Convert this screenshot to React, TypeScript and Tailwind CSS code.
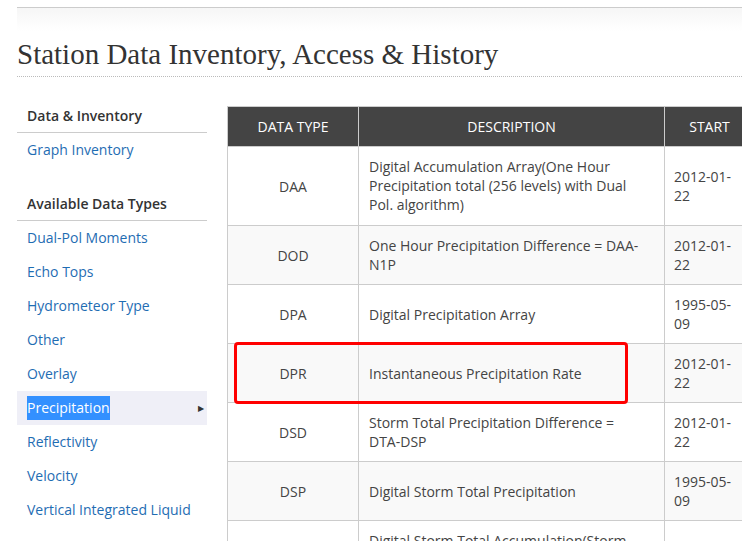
import React from "react";

const sans = { fontFamily: '"Open Sans", "Liberation Sans", sans-serif' };

const rows: { t: string; d: string[]; s: string[]; bg: string }[] = [
  { t: "DAA", d: ["Digital Accumulation Array(One Hour", "Precipitation total (256 levels) with Dual", "Pol. algorithm)"], s: ["2012-01-", "22"], bg: "bg-white" },
  { t: "DOD", d: ["One Hour Precipitation Difference = DAA-", "N1P"], s: ["2012-01-", "22"], bg: "bg-[#f9f9f9]" },
  { t: "DPA", d: ["Digital Precipitation Array"], s: ["1995-05-", "09"], bg: "bg-white" },
  { t: "DPR", d: ["Instantaneous Precipitation Rate"], s: ["2012-01-", "22"], bg: "bg-[#f9f9f9]" },
  { t: "DSD", d: ["Storm Total Precipitation Difference =", "DTA-DSP"], s: ["2012-01-", "22"], bg: "bg-white" },
  { t: "DSP", d: ["Digital Storm Total Precipitation"], s: ["1995-05-", "09"], bg: "bg-[#f9f9f9]" },
  { t: "DTA", d: ["Digital Storm Total Accumulation(Storm", "Total Precipitation with Dual Pol.", "algorithm)"], s: ["2012-01-", "22"], bg: "bg-white" },
];

const items = [
  "Dual-Pol Moments",
  "Echo Tops",
  "Hydrometeor Type",
  "Other",
  "Overlay",
  "Precipitation",
  "Reflectivity",
  "Velocity",
  "Vertical Integrated Liquid",
];

export default function App() {
  return (
    <div className="w-[742px] h-[541px] overflow-hidden bg-white text-[#444]" style={sans}>
      <div className="pt-[7px] pl-[17px]">
        <div className="h-[24px] border-t border-[#cccccc] bg-gradient-to-b from-[#f6f6f6] to-white" />
        <h1
          className="text-[29px] leading-[36px] text-[#333] pt-[5px] pb-[4px] border-b border-dotted border-[#bbbbbb] whitespace-nowrap"
          style={{ fontFamily: '"Liberation Serif", "DejaVu Serif", serif' }}
        >
          Station Data Inventory, Access &amp; History
        </h1>
      </div>
      <div className="flex pl-[17px] pt-[22px]">
        <div className="w-[190px] shrink-0 text-[14px]">
          <div className="h-[34px] leading-[34px] pl-[10px] font-semibold text-[#333] border-b border-[#cccccc]">
            Data &amp; Inventory
          </div>
          <div className="h-[34px] leading-[34px] pl-[10px] text-[#1f6db3]">Graph Inventory</div>
          <div className="mt-[20px] h-[34px] leading-[34px] pl-[10px] font-semibold text-[#333] border-b border-[#cccccc]">
            Available Data Types
          </div>
          {items.map((it) =>
            it === "Precipitation" ? (
              <div key={it} className="h-[34px] flex items-center pl-[10px] pr-[3px] bg-[#efeff7]">
                <span className="bg-[#3390ff] text-white leading-[24px]">{it}</span>
                <span className="ml-auto text-[#333] text-[8px]">▶</span>
              </div>
            ) : (
              <div key={it} className="h-[34px] leading-[34px] pl-[10px] text-[#1f6db3]">
                {it}
              </div>
            )
          )}
        </div>
        <div className="relative ml-[20px] mt-[7px]">
          <table className="border-collapse text-[14px] leading-[19px] w-[620px] table-fixed">
            <colgroup>
              <col className="w-[131px]" />
              <col className="w-[306px]" />
              <col className="w-[90px]" />
              <col className="w-[93px]" />
            </colgroup>
            <thead>
              <tr className="bg-[#444] text-white">
                <th className="h-[40px] font-normal border border-[#cccccc] text-center">DATA TYPE</th>
                <th className="font-normal border border-[#cccccc] text-center">DESCRIPTION</th>
                <th className="font-normal border border-[#cccccc] text-center">START</th>
                <th className="font-normal border border-[#cccccc] text-center"></th>
              </tr>
            </thead>
            <tbody>
              {rows.map((r, idx) => (
                <tr key={r.t} className={r.bg}>
                  <td className="border border-[#cccccc] text-center py-[10px]">{r.t}</td>
                  <td className={idx === 0 ? "border border-[#cccccc] px-[10px] pt-[10px] pb-[11px]" : "border border-[#cccccc] px-[10px] py-[10px]"}>
                    {r.d.map((l, i) => (
                      <div key={i}>{l}</div>
                    ))}
                  </td>
                  <td className="border border-[#cccccc] px-[9px] py-[10px]">
                    {r.s.map((l, i) => (
                      <div key={i}>{l}</div>
                    ))}
                  </td>
                  <td className="border border-[#cccccc] px-[9px] py-[10px]"></td>
                </tr>
              ))}
            </tbody>
          </table>
          <div className="absolute left-[7px] top-[236px] w-[394px] h-[62px] border-[3px] border-[#ff0000] rounded-[4px]" />
        </div>
      </div>
    </div>
  );
}
